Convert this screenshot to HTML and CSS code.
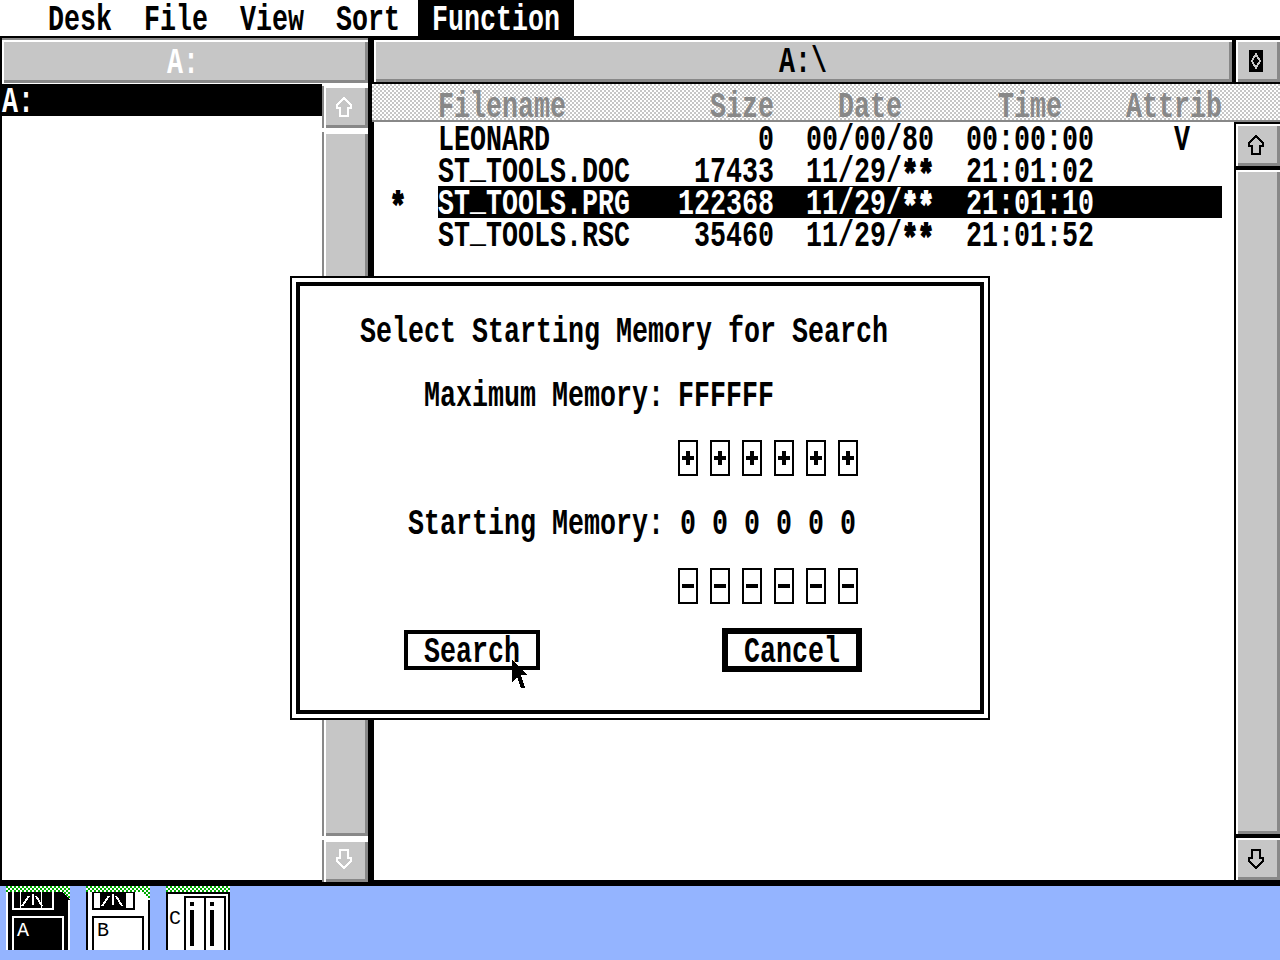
FILE: index.html
```html
<!DOCTYPE html>
<html lang="en">

<head>
    <meta charset="UTF-8">
    <title>ST Tools</title>
    <link rel="stylesheet" href="styles.css">
</head>

<body>

    <div class="screen">
        <div class="menu-bar">
            <span class="menu-item"><span class="tx">Desk</span></span>
            <span class="menu-item"><span class="tx">File</span></span>
            <span class="menu-item"><span class="tx">View</span></span>
            <span class="menu-item"><span class="tx">Sort</span></span>
            <span class="menu-item active"><span class="tx">Function</span></span>
        </div>

        <div class="windows">
            <div class="window-left">
                <div class="title-left bevel"><span class="tx">A:</span></div>
                <div class="left-body">
                    <div class="drive-list">
                        <div class="drive-row"><span class="tx">A:</span></div>
                    </div>
                    <div class="scroll scroll-left">
                        <div class="scroll-btn bevel">
                            <svg class="arrow" width="18" height="22" viewBox="0 0 18 22"><path d="M9 2 L16 9 V12 H13 V20 H5 V12 H2 V9 Z" /></svg>
                        </div>
                        <div class="scroll-track bevel"></div>
                        <div class="scroll-btn bevel last">
                            <svg class="arrow" width="18" height="22" viewBox="0 0 18 22"><path d="M9 20 L16 13 V10 H13 V2 H5 V10 H2 V13 Z" /></svg>
                        </div>
                    </div>
                </div>
            </div>

            <div class="window-right">
                <div class="title-row">
                    <div class="title-right bevel"><span class="tx">A:\</span></div>
                    <div class="full-btn bevel">
                        <svg width="14" height="22" viewBox="0 0 14 22" shape-rendering="crispEdges">
                            <rect width="14" height="22" fill="#000" />
                            <polygon points="7,2 12,11 7,20 2,11" fill="#c6c6c6" />
                            <polygon points="7,6 10,11 7,16 4,11" fill="#000" />
                        </svg>
                    </div>
                </div>

                <div class="file-header">
                    <span class="col-name"><span class="tx">Filename</span></span>
                    <span class="col-size"><span class="tx">Size</span></span>
                    <span class="col-date center"><span class="tx">Date</span></span>
                    <span class="col-time center"><span class="tx">Time</span></span>
                    <span class="col-attr"><span class="tx">Attrib</span></span>
                </div>

                <div class="right-body">
                    <div class="file-list">
                        <div class="file-row">
                            <span class="col-name"><span class="tx">LEONARD</span></span>
                            <span class="col-size"><span class="tx">0</span></span>
                            <span class="col-date"><span class="tx">00/00/80</span></span>
                            <span class="col-time"><span class="tx">00:00:00</span></span>
                            <span class="col-attr"><span class="attr-flag tx">V</span></span>
                        </div>
                        <div class="file-row">
                            <span class="col-name"><span class="tx">ST<span class="under">_</span>TOOLS.DOC</span></span>
                            <span class="col-size"><span class="tx">17433</span></span>
                            <span class="col-date"><span class="tx">11/29/<span class="ast">*</span><span class="ast">*</span></span></span>
                            <span class="col-time"><span class="tx">21:01:02</span></span>
                            <span class="col-attr"></span>
                        </div>
                        <div class="file-row selected">
                            <span class="star"><span class="tx"><span class="ast">*</span></span></span>
                            <span class="col-name"><span class="tx">ST<span class="under">_</span>TOOLS.PRG</span></span>
                            <span class="col-size"><span class="tx">122368</span></span>
                            <span class="col-date"><span class="tx">11/29/<span class="ast">*</span><span class="ast">*</span></span></span>
                            <span class="col-time"><span class="tx">21:01:10</span></span>
                            <span class="col-attr"></span>
                        </div>
                        <div class="file-row">
                            <span class="col-name"><span class="tx">ST<span class="under">_</span>TOOLS.RSC</span></span>
                            <span class="col-size"><span class="tx">35460</span></span>
                            <span class="col-date"><span class="tx">11/29/<span class="ast">*</span><span class="ast">*</span></span></span>
                            <span class="col-time"><span class="tx">21:01:52</span></span>
                            <span class="col-attr"></span>
                        </div>
                    </div>
                    <div class="scroll scroll-right">
                        <div class="scroll-btn bevel">
                            <svg class="arrow" width="18" height="22" viewBox="0 0 18 22"><path d="M9 2 L16 9 V12 H13 V20 H5 V12 H2 V9 Z" /></svg>
                        </div>
                        <div class="scroll-track bevel"></div>
                        <div class="scroll-btn bevel">
                            <svg class="arrow" width="18" height="22" viewBox="0 0 18 22"><path d="M9 20 L16 13 V10 H13 V2 H5 V10 H2 V13 Z" /></svg>
                        </div>
                    </div>
                </div>
            </div>
        </div>

        <div class="desktop">
            <svg class="drive-icon" width="64" height="64" viewBox="0 0 64 64" shape-rendering="crispEdges">
                <defs>
                    <pattern id="dither" width="4" height="4" patternUnits="userSpaceOnUse">
                        <rect width="4" height="4" fill="#fff" />
                        <rect width="2" height="2" fill="#00a800" />
                        <rect x="2" y="2" width="2" height="2" fill="#00a800" />
                    </pattern>
                </defs>
                <polygon points="0,6 56,6 64,14 64,64 0,64" fill="#000" />
                <rect x="0" y="6" width="2" height="58" fill="#fff" />
                <rect x="62" y="14" width="2" height="50" fill="#fff" />
                <rect x="6" y="6" width="42" height="18" fill="#fff" />
                <rect x="8" y="6" width="6" height="16" fill="#000" />
                <rect x="36" y="6" width="10" height="16" fill="#000" />
                <rect x="15" y="6" width="20" height="16" fill="#000" />
                <path d="M16 20 L23 10 M27 8 V19 M30 10 L36 20" stroke="#fff" stroke-width="2" fill="none" />
                <rect x="7" y="31" width="50" height="40" fill="#000" stroke="#fff" stroke-width="2" />
                <rect y="0" width="64" height="6" fill="url(#dither)" />
                <polygon points="56,6 64,6 64,14" fill="url(#dither)" />
                <text x="11" y="50" class="icon-letter">A</text>
            </svg>
            <svg class="drive-icon" width="64" height="64" viewBox="0 0 64 64" shape-rendering="crispEdges">
                <polygon points="0,6 56,6 64,14 64,64 0,64" fill="#fff" />
                <rect x="0" y="6" width="2" height="58" fill="#000" />
                <rect x="62" y="14" width="2" height="50" fill="#000" />
                <rect x="7" y="6" width="41" height="17" fill="#fff" stroke="#000" stroke-width="2" />
                <rect x="14" y="6" width="26" height="16" fill="#000" />
                <path d="M16 20 L23 10 M27 8 V19 M30 10 L36 20" stroke="#fff" stroke-width="2" fill="none" />
                <rect x="7" y="31" width="50" height="40" fill="#fff" stroke="#000" stroke-width="2" />
                <rect y="0" width="64" height="6" fill="url(#dither)" />
                <polygon points="56,6 64,6 64,14" fill="url(#dither)" />
                <text x="11" y="50" class="icon-letter dark">B</text>
            </svg>
            <svg class="drive-icon" width="64" height="64" viewBox="0 0 64 64" shape-rendering="crispEdges">
                <rect y="6" width="64" height="58" fill="#fff" />
                <rect x="0" y="6" width="2" height="58" fill="#000" />
                <rect x="62" y="6" width="2" height="58" fill="#000" />
                <rect x="0" y="6" width="64" height="2" fill="#000" />
                <rect x="19" y="11" width="20" height="60" fill="#fff" stroke="#000" stroke-width="2" />
                <rect x="39" y="11" width="20" height="60" fill="#fff" stroke="#000" stroke-width="2" />
                <rect x="24" y="16" width="4" height="4" fill="#000" />
                <rect x="24" y="24" width="4" height="36" fill="#000" />
                <rect x="44" y="16" width="4" height="4" fill="#000" />
                <rect x="44" y="24" width="4" height="36" fill="#000" />
                <rect y="0" width="64" height="6" fill="url(#dither)" />
                <text x="3" y="38" class="icon-letter dark">C</text>
            </svg>
        </div>

        <div class="dialog">
            <div class="dialog-inner">
                <div class="dialog-title"><span class="tx">Select Starting Memory for Search</span></div>

                <div class="mem-row">
                    <span class="mem-label"><span class="tx">Maximum Memory:</span></span>
                    <span class="mem-value"><span class="tx">FFFFFF</span></span>
                </div>

                <div class="mem-row stepper-row">
                    <span class="mem-label"></span>
                    <div class="cells">
                        <span class="step-btn"><span class="plus"></span></span>
                        <span class="step-btn"><span class="plus"></span></span>
                        <span class="step-btn"><span class="plus"></span></span>
                        <span class="step-btn"><span class="plus"></span></span>
                        <span class="step-btn"><span class="plus"></span></span>
                        <span class="step-btn"><span class="plus"></span></span>
                    </div>
                </div>

                <div class="mem-row">
                    <span class="mem-label"><span class="tx">Starting Memory:</span></span>
                    <div class="cells">
                        <span class="digit"><span class="tx">0</span></span>
                        <span class="digit"><span class="tx">0</span></span>
                        <span class="digit"><span class="tx">0</span></span>
                        <span class="digit"><span class="tx">0</span></span>
                        <span class="digit"><span class="tx">0</span></span>
                        <span class="digit"><span class="tx">0</span></span>
                    </div>
                </div>

                <div class="mem-row stepper-row">
                    <span class="mem-label"></span>
                    <div class="cells">
                        <span class="step-btn"><span class="minus"></span></span>
                        <span class="step-btn"><span class="minus"></span></span>
                        <span class="step-btn"><span class="minus"></span></span>
                        <span class="step-btn"><span class="minus"></span></span>
                        <span class="step-btn"><span class="minus"></span></span>
                        <span class="step-btn"><span class="minus"></span></span>
                    </div>
                </div>

                <div class="dialog-buttons">
                    <span class="btn btn-search"><span class="tx">Search</span></span>
                    <span class="btn btn-cancel"><span class="tx">Cancel</span></span>
                </div>
            </div>
        </div>

        <svg class="cursor" width="20" height="30" viewBox="0 0 20 30" shape-rendering="crispEdges">
            <polygon points="1,1 1,23 6,18 10,29 14,29 10,16 17,16" fill="#000" />
        </svg>
    </div>

</body>

</html>
```

FILE: styles.css
```css
body,
html {
    margin: 0;
    padding: 0;
    height: 100%;
    overflow: hidden;
    background-color: white;
}

.screen {
    position: relative;
    width: 1280px;
    height: 960px;
    display: flex;
    flex-direction: column;
    font-family: "Liberation Mono", monospace;
    font-weight: bold;
    font-size: 26.67px;
    line-height: 32px;
    color: black;
}

/* the ST system font is tall and narrow, so stretch the mono font */
.tx {
    display: inline-block;
    white-space: pre;
    line-height: 23px;
    transform: translateY(3px) scaleY(1.36);
}

/* asterisks are big and heavy in that font */
.ast {
    display: inline-block;
    line-height: 16px;
    -webkit-text-stroke: 1.5px currentColor;
    transform: translateY(3px);
}

/* underscore sits right under the letters, not below the row */
.under {
    display: inline-block;
    line-height: 16px;
    transform: translateY(-3px);
}

.bevel {
    background-color: #c6c6c6;
    box-shadow: inset 2px 2px 0 white, inset -3px -3px 0 #888888;
}

/* menu */
.menu-bar {
    height: 36px;
    flex: none;
    display: flex;
    padding-left: 32px;
    border-bottom: 2px solid black;
}

.menu-item {
    width: 96px;
    text-align: center;
    padding-top: 2px;
}

.menu-item.active {
    width: 156px;
    margin-left: 2px;
    background-color: black;
    color: white;
}

/* windows */
.windows {
    height: 848px;
    flex: none;
    display: flex;
}

.window-left {
    width: 366px;
    flex: none;
    display: flex;
    flex-direction: column;
    border-left: 2px solid black;
    border-right: 4px solid black;
    border-bottom: 6px solid black;
}

.title-left {
    height: 45px;
    flex: none;
    border-top: 2px solid #888888;
    box-sizing: border-box;
    text-align: center;
    color: white;
    padding: 5px 4px 0 0;
}

.left-body {
    flex: 1;
    display: flex;
    min-height: 0;
}

.drive-list {
    flex: 1;
    padding-top: 1px;
}

.drive-row {
    height: 32px;
    background-color: black;
    color: white;
}

.scroll {
    width: 44px;
    flex: none;
    display: flex;
    flex-direction: column;
    gap: 4px;
}

.scroll-left {
    width: 46px;
    padding-top: 3px;
    box-sizing: border-box;
    color: white;
}

.scroll-left .scroll-btn,
.scroll-left .scroll-track {
    border-left: 2px solid #888888;
}

.scroll-btn {
    height: 42px;
    flex: none;
    box-sizing: border-box;
    padding-right: 4px;
    display: flex;
    align-items: center;
    justify-content: center;
}

.scroll-btn.last {
    margin-bottom: -2px;
    padding-bottom: 4px;
}

.scroll-track {
    flex: 1;
}

.arrow {
    fill: none;
    stroke: currentColor;
    stroke-width: 2;
    shape-rendering: crispEdges;
}

.window-right {
    flex: 1;
    display: flex;
    flex-direction: column;
    border-left: 2px solid black;
    border-top: 2px solid black;
    border-bottom: 6px solid black;
}

.title-row {
    height: 44px;
    flex: none;
    display: flex;
    border-bottom: 2px solid black;
    box-sizing: border-box;
    background-color: black;
    gap: 4px;
}

.title-right {
    flex: 1;
    text-align: center;
    padding-top: 4px;
}

.full-btn {
    width: 44px;
    padding-right: 5px;
    box-sizing: border-box;
    display: flex;
    align-items: center;
    justify-content: center;
}

.file-header {
    height: 38px;
    flex: none;
    box-sizing: border-box;
    display: flex;
    margin-left: -2px;
    padding: 5px 0 0 66px;
    color: #888888;
    background: repeating-conic-gradient(#c6c6c6 0 25%, white 0 50%) 0 0 / 4px 4px;
    border-bottom: 2px solid #888888;
}

.right-body {
    flex: 1;
    display: flex;
    min-height: 0;
}

.file-list {
    flex: 1;
}

.file-row {
    position: relative;
    width: 784px;
    height: 32px;
    margin-left: 64px;
    display: flex;
}

.file-row.selected {
    background-color: black;
    color: white;
}

.star {
    position: absolute;
    left: -48px;
    color: black;
}

.col-name {
    width: 240px;
}

.col-size {
    width: 96px;
    text-align: right;
    margin-right: 32px;
}

.col-date {
    width: 128px;
    margin-right: 32px;
}

.col-time {
    width: 128px;
    margin-right: 32px;
}

.col-attr {
    width: 96px;
}

.center {
    text-align: center;
}

.attr-flag {
    margin-left: 48px;
}

.scroll-right {
    background-color: black;
    border-left: 2px solid black;
    padding-top: 2px;
    box-sizing: border-box;
    width: 46px;
}

/* desktop icons */
.desktop {
    flex: 1;
    background-color: #94b4ff;
    display: flex;
    align-items: flex-start;
    gap: 16px;
    padding-left: 6px;
}

.drive-icon {
    display: block;
}

.icon-letter {
    font-family: "Liberation Mono", monospace;
    font-size: 20px;
    font-weight: normal;
    fill: white;
}

.icon-letter.dark {
    fill: black;
}

/* dialog */
.dialog {
    position: absolute;
    left: 290px;
    top: 276px;
    width: 700px;
    height: 444px;
    box-sizing: border-box;
    border: 2px solid black;
    padding: 4px;
    background-color: white;
}

.dialog-inner {
    height: 100%;
    box-sizing: border-box;
    border: 4px solid black;
    padding-top: 28px;
    display: flex;
    flex-direction: column;
    gap: 32px;
}

.dialog-title {
    padding-left: 60px;
}

.mem-row {
    display: flex;
    height: 32px;
    align-items: center;
}

.stepper-row {
    height: 36px;
    margin: -2px 0;
}

.mem-label {
    width: 364px;
    margin-right: 14px;
    text-align: right;
}

.cells {
    display: flex;
    gap: 12px;
}

.digit {
    width: 20px;
    text-align: center;
}

.step-btn {
    width: 20px;
    height: 36px;
    box-sizing: border-box;
    border: 2px solid black;
    display: flex;
    align-items: center;
    justify-content: center;
}

.plus,
.minus {
    display: block;
    width: 12px;
    height: 4px;
    background-color: black;
}

.plus::after {
    content: '';
    display: block;
    width: 4px;
    height: 14px;
    margin: -5px 0 0 4px;
    background-color: black;
}

.dialog-buttons {
    height: 44px;
    display: flex;
    align-items: center;
    margin-top: -6px;
}

.btn {
    display: flex;
    align-items: center;
    justify-content: center;
    box-sizing: border-box;
    border-style: solid;
    border-color: black;
}

.btn-search {
    width: 136px;
    height: 40px;
    border-width: 4px;
    margin-left: 104px;
}

.btn-cancel {
    width: 140px;
    height: 44px;
    border-width: 6px;
    margin-left: 182px;
}

.cursor {
    position: absolute;
    left: 511px;
    top: 659px;
}
```
